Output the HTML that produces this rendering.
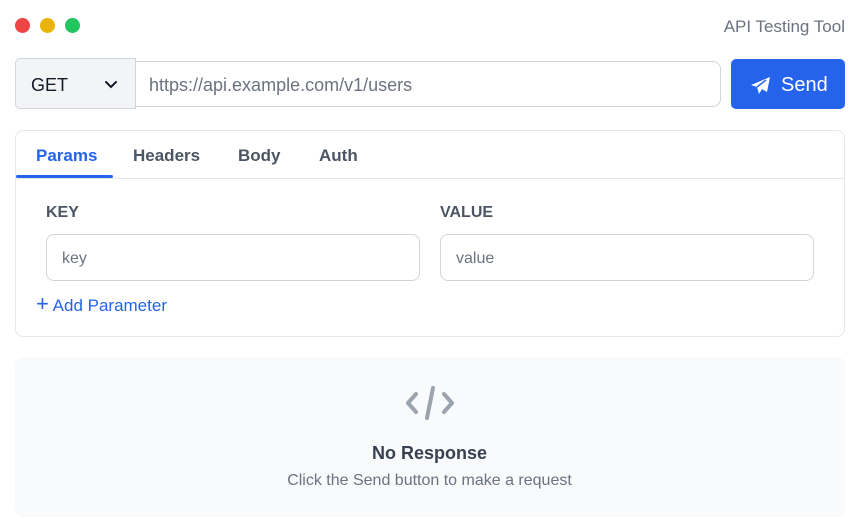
<!DOCTYPE html>
<html><head><style>
*{box-sizing:border-box;margin:0;padding:0}
body{width:859px;height:528px;background:#fff;font-family:"Liberation Sans",sans-serif;position:relative;overflow:hidden;color:#374151}
.a{position:absolute}
.dot{width:15px;height:15px;border-radius:50%;top:18px}
</style></head><body>
<div class="a dot" style="left:15px;background:#ef4444"></div>
<div class="a dot" style="left:40px;background:#eab308"></div>
<div class="a dot" style="left:65px;background:#22c55e"></div>
<div class="a" style="right:14px;top:17px;font-size:17px;color:#6b7280">API Testing Tool</div>

<div class="a" style="left:15px;top:58px;width:121px;height:51px;background:#f3f4f6;border:1px solid #d1d5db;border-radius:5px 0 0 5px"></div>
<div class="a" style="left:31px;top:75px;font-size:18px;color:#111827">GET</div>
<svg class="a" style="left:104px;top:80px" width="14" height="9" viewBox="0 0 14 9"><path d="M2 2l5 5 5-5" stroke="#111827" stroke-width="2" fill="none" stroke-linecap="round"/></svg>
<div class="a" style="left:135px;top:61px;width:586px;height:46px;border:1px solid #d1d5db;border-left:none;border-radius:0 8px 8px 0"></div>
<div class="a" style="left:149px;top:75px;font-size:18px;color:#6b7280">https://api.example.com/v1/users</div>
<div class="a" style="left:731px;top:59px;width:114px;height:50px;background:#2563eb;border-radius:5px;color:#fff;font-size:20px">
<svg class="a" style="left:19px;top:17px" width="21" height="19" viewBox="0 0 21 19"><path d="M20 1L1 9l6 2 2 7 3-5 5 3z" fill="#fff"/><path d="M7 11l9-7" stroke="#2563eb" stroke-width="1.5"/></svg>
<span class="a" style="left:50px;top:15px">Send</span></div>

<div class="a" style="left:15px;top:130px;width:830px;height:207px;border:1px solid #e5e7eb;border-radius:8px"></div>
<div class="a" style="left:16px;top:178px;width:828px;height:1px;background:#e5e7eb"></div>
<div class="a" style="left:16px;top:175px;width:97px;height:3px;background:#2563eb;border-radius:2px"></div>
<div class="a" style="left:36px;top:146px;font-size:17px;font-weight:bold;color:#2563eb">Params</div>
<div class="a" style="left:133px;top:146px;font-size:17px;font-weight:bold;color:#4b5563">Headers</div>
<div class="a" style="left:238px;top:146px;font-size:17px;font-weight:bold;color:#4b5563">Body</div>
<div class="a" style="left:319px;top:146px;font-size:17px;font-weight:bold;color:#4b5563">Auth</div>
<div class="a" style="left:46px;top:204px;font-size:16px;font-weight:bold;color:#4b5563">KEY</div>
<div class="a" style="left:440px;top:204px;font-size:16px;font-weight:bold;color:#4b5563">VALUE</div>
<div class="a" style="left:46px;top:234px;width:374px;height:47px;border:1px solid #d1d5db;border-radius:8px"></div>
<div class="a" style="left:440px;top:234px;width:374px;height:47px;border:1px solid #d1d5db;border-radius:8px"></div>
<div class="a" style="left:62px;top:250px;font-size:16px;color:#6b7280">key</div>
<div class="a" style="left:456px;top:250px;font-size:16px;color:#6b7280">value</div>
<div class="a" style="left:36px;top:295px;font-size:17px;color:#2563eb"><span style="font-size:22px;line-height:17px">+</span> Add Parameter</div>

<div class="a" style="left:15px;top:357px;width:830px;height:160px;background:#f9fafb;border-radius:8px"></div>
<svg class="a" style="left:405px;top:384px" width="50" height="38" viewBox="0 0 50 38"><path d="M11 10l-8 9 8 9M39 10l8 9-8 9M28 4l-6 30" stroke="#9ca3af" stroke-width="4" fill="none" stroke-linecap="round" stroke-linejoin="round"/></svg>
<div class="a" style="left:0;width:859px;text-align:center;top:443px;font-size:18px;font-weight:bold;color:#374151">No Response</div>
<div class="a" style="left:0;width:859px;text-align:center;top:472px;font-size:16px;color:#6b7280">Click the Send button to make a request</div>
</body></html>
